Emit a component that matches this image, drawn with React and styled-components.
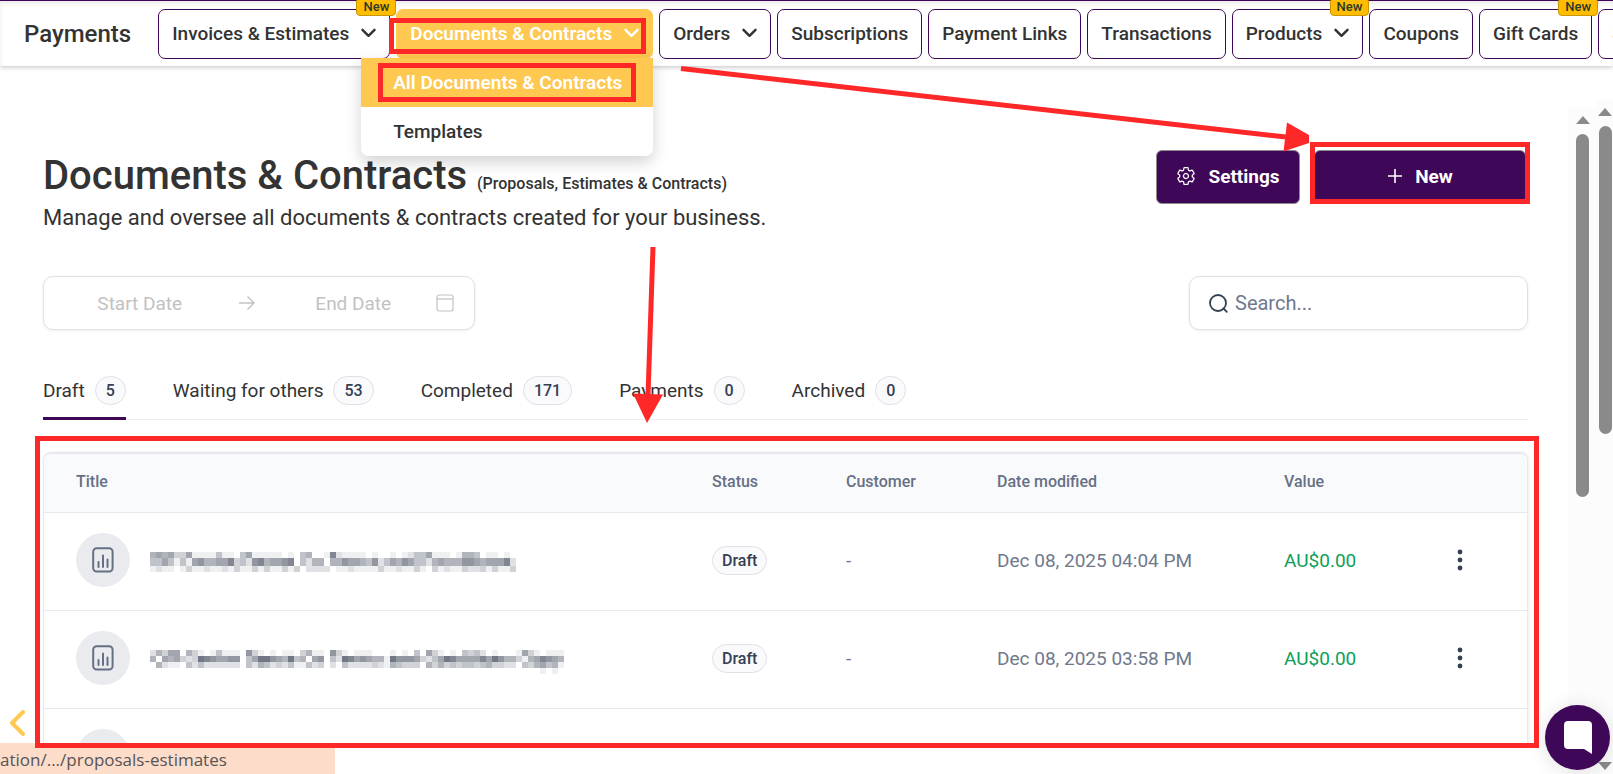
import { useState } from 'react';
import styled, { createGlobalStyle } from 'styled-components';
import { IoSettingsOutline } from 'react-icons/io5';

const GlobalStyle = createGlobalStyle`
* {
    box-sizing: border-box;
}
body {
    margin: 0;
    background-color: #fff;
    color: #333;
    font-family: Roboto, Arial, sans-serif;
}
button, input {
    font-family: inherit;
}
`;

const Page = styled.div`
position: relative;
height: 100vh;
display: flex;
flex-direction: column;
overflow: hidden;
`;

/* ---------- top bar ---------- */

const TopBar = styled.header`
position: relative;
z-index: 5;
display: flex;
align-items: center;
height: 66px;
flex-shrink: 0;
padding-left: 24px;
border-top: 1px solid #3f0758;
background-color: #fff;
box-shadow: 0 1px 5px rgba(0, 0, 0, 0.25), inset 0 3px 4px rgba(0, 0, 0, 0.08);
`;

const Brand = styled.h2`
margin: 0 27px 0 0;
font-size: 24px;
font-weight: 500;
white-space: nowrap;
`;

const Nav = styled.nav`
display: flex;
gap: 6px;
`;

const NavItem = styled.div`
position: relative;
flex-shrink: 0;
`;

const NavButton = styled.button`
display: flex;
align-items: center;
gap: 12px;
height: 50px;
padding: 0 13px;
border: 1px solid ${(p) => (p.$active ? '#ffc850' : '#3f0758')};
border-radius: 7px;
background-color: ${(p) => (p.$active ? '#ffc850' : '#fff')};
color: ${(p) => (p.$active ? '#fff' : '#333')};
font-size: 19px;
font-weight: ${(p) => (p.$active ? 600 : 500)};
white-space: nowrap;
cursor: pointer;
`;

const NewBadge = styled.span`
position: absolute;
top: -11px;
right: -6px;
padding: 0 6px;
height: 18px;
line-height: 16px;
border: 1px solid #c99700;
border-radius: 4px;
background-color: #ffbc00;
color: #2b3a2b;
font-size: 13px;
font-weight: 500;
z-index: 2;
`;

const Dropdown = styled.div`
position: absolute;
top: 49px;
right: 0;
width: 292px;
border-radius: 0 0 8px 8px;
background-color: #fff;
box-shadow: 0 6px 16px rgba(0, 0, 0, 0.18);
overflow: hidden;
`;

const DropdownLink = styled.a`
display: block;
padding-left: 32px;
line-height: 49px;
font-size: 19px;
font-weight: ${(p) => (p.$active ? 600 : 500)};
color: ${(p) => (p.$active ? '#fff' : '#333')};
background-color: ${(p) => (p.$active ? '#ffc850' : '#fff')};
text-decoration: none;
`;

/* red frame drawn over the thing it sits in */
const Highlight = styled.div`
position: absolute;
inset: ${(p) => p.$inset};
border: 5px solid #ff2828;
pointer-events: none;
z-index: 4;
`;

/* ---------- content ---------- */

const Body = styled.div`
display: flex;
flex: 1;
min-height: 0;
`;

const Main = styled.main`
display: flex;
flex-direction: column;
flex: 1;
min-width: 0;
padding: 84px 40px 31px 43px;
`;

const TitleRow = styled.div`
display: flex;
justify-content: space-between;
align-items: flex-start;
`;

const Heading = styled.h1`
margin: 0;
font-size: 40px;
line-height: 52px;
font-weight: 500;
white-space: nowrap;
`;

const SubHeading = styled.span`
margin-left: 10px;
font-size: 16px;
line-height: 1;
`;

const Description = styled.p`
margin: 0;
font-size: 22px;
line-height: 32px;
`;

const Actions = styled.div`
display: flex;
gap: 14px;
margin-right: 2px;
`;

const ActionWrap = styled.div`
position: relative;
`;

const ActionButton = styled.button`
display: flex;
align-items: center;
justify-content: center;
gap: 12px;
width: ${(p) => (p.$wide ? '212px' : '144px')};
height: 54px;
padding: 0 0 2px;
border: 1px solid #8a8a8a;
border-radius: 6px;
background-color: #3f0758;
color: #fff;
font-size: 19px;
font-weight: 700;
cursor: pointer;
`;

const Filters = styled.div`
display: flex;
justify-content: space-between;
margin-top: 42px;
`;

const FieldBox = styled.div`
display: flex;
align-items: center;
height: 54px;
border: 1px solid #e0e0e6;
border-radius: 10px;
box-shadow: 0 1px 3px rgba(16, 24, 40, 0.08);
color: #c2c2c2;
`;

const DateRange = styled(FieldBox)`
width: 432px;
padding: 0 20px 0 13px;
`;

const SearchBox = styled(FieldBox)`
width: 339px;
gap: 7px;
padding: 0 19px;
color: #344054;
`;

const TextInput = styled.input`
flex: 1;
min-width: 0;
padding: 0;
border: 0;
outline: 0;
background: none;
font-size: ${(p) => (p.$centered ? '19px' : '20px')};
text-align: ${(p) => (p.$centered ? 'center' : 'left')};
&::placeholder {
    color: ${(p) => (p.$centered ? '#c2c2c2' : '#70798c')};
    opacity: 1;
}
`;

const ArrowGap = styled.span`
display: flex;
padding: 0 16px;
`;

const Tabs = styled.div`
display: flex;
gap: 47px;
margin-top: 35px;
border-bottom: 1px solid #ececf2;
`;

const Tab = styled.button`
display: flex;
align-items: center;
gap: 10px;
height: 55px;
margin-bottom: -1px;
padding: 0 0 1px;
border: 0;
border-bottom: 3px solid ${(p) => (p.$active ? '#3f0758' : 'transparent')};
background: none;
color: #333;
font-size: 19px;
white-space: nowrap;
cursor: pointer;
`;

const Pill = styled.span`
display: inline-block;
min-width: 29px;
padding: 0 9px;
line-height: 27px;
border: 1px solid #e0e0e6;
border-radius: 15px;
background-color: #fafafc;
color: #344054;
font-size: 16px;
font-weight: 500;
text-align: center;
`;

const TabPill = styled(Pill)`
padding: 0 10px;
`;

const TableArea = styled.section`
position: relative;
flex: 1;
min-height: 0;
margin-top: 32px;
`;

const TableClip = styled.div`
height: 100%;
overflow: hidden;
border: 1px solid #e8e9ee;
border-top-width: 2px;
border-bottom: 0;
border-radius: 8px 8px 0 0;
box-shadow: 1px 0 3px rgba(16, 24, 40, 0.08);
`;

const Table = styled.table`
width: 100%;
table-layout: fixed;
border-collapse: collapse;
`;

const Th = styled.th`
width: ${(p) => p.$width || 'auto'};
height: 58px;
padding: 0 0 2px 32px;
border-bottom: 1px solid #e8e9ee;
background-color: #f9fafc;
color: #667085;
font-size: 16px;
font-weight: 500;
text-align: left;
`;

const Td = styled.td`
height: 98px;
padding: 0 0 2px 32px;
border-bottom: 1px solid #e8e9ee;
color: ${(p) => (p.$green ? '#0f9f58' : '#70798c')};
font-size: 19px;
white-space: nowrap;
`;

const TitleCell = styled.div`
display: flex;
align-items: center;
gap: 20px;
`;

const Avatar = styled.span`
display: flex;
align-items: center;
justify-content: center;
width: 54px;
height: 54px;
border-radius: 50%;
background-color: #eaebef;
color: #667085;
`;

const IconButton = styled.button`
display: flex;
padding: 4px;
border: 0;
background: none;
color: #344054;
cursor: pointer;
`;

/* ---------- scrollbars, floating things ---------- */

const Scrollbar = styled.div`
display: flex;
flex-direction: column;
align-items: center;
justify-content: space-between;
gap: 10px;
flex-shrink: 0;
width: ${(p) => p.$width};
margin-top: ${(p) => p.$top};
padding: 8px 0 4px;
background-color: #fcfcfc;
`;

const Triangle = styled.span`
flex-shrink: 0;
border: 7px solid transparent;
border-top-width: ${(p) => (p.$down ? '8px' : '0')};
border-bottom-width: ${(p) => (p.$down ? '0' : '8px')};
border-top-color: #8a8a8a;
border-bottom-color: #8a8a8a;
`;

const Track = styled.div`
flex: 1;
width: 13px;
`;

const Thumb = styled.div`
height: ${(p) => p.$size};
border-radius: 7px;
background-color: #8a8a8a;
`;

const BackButton = styled.button`
position: absolute;
left: 9px;
bottom: 37px;
display: flex;
padding: 0;
border: 0;
background: none;
cursor: pointer;
`;

const StatusBar = styled.div`
position: absolute;
left: 0;
bottom: 0;
width: 335px;
height: 31px;
background-color: #fddcca;
color: #555;
font-family: "Open Sans", "Noto Sans", sans-serif;
font-size: 17px;
line-height: 34px;
white-space: nowrap;
`;

const ChatButton = styled.button`
position: absolute;
right: 3px;
bottom: 4px;
display: flex;
align-items: center;
justify-content: center;
width: 65px;
height: 65px;
padding: 0;
border: 0;
border-radius: 50%;
background-color: #3f0758;
box-shadow: 0 2px 20px rgba(0, 0, 0, 0.12);
cursor: pointer;
z-index: 3;
`;

const Arrows = styled.svg`
position: absolute;
top: 0;
left: 0;
pointer-events: none;
z-index: 6;
`;

const navItems = [
    { label: 'Invoices & Estimates', menu: true, isNew: true },
    { label: 'Documents & Contracts', menu: true, active: true },
    { label: 'Orders', menu: true },
    { label: 'Subscriptions' },
    { label: 'Payment Links' },
    { label: 'Transactions' },
    { label: 'Products', menu: true, isNew: true },
    { label: 'Coupons' },
    { label: 'Gift Cards', isNew: true },
    { label: 'Settings' },
];

const tabs = [
    { label: 'Draft', count: 5 },
    { label: 'Waiting for others', count: 53 },
    { label: 'Completed', count: 171 },
    { label: 'Payments', count: 0 },
    { label: 'Archived', count: 0 },
];

// censored titles: one digit per block, 0 is clear and 9 is darkest
const documents = [
    {
        id: 1,
        status: 'Draft',
        customer: '-',
        date: 'Dec 08, 2025 04:04 PM',
        value: 'AU$0.00',
        tops: [0, 6, 14, 20],
        mosaic: [
            '5656336111141104611111010450018211110100101244611101554011010',
            '4464141675566834278566780425505576654724657644256555776566682',
            '1211013112112131131311313022220112111131121131031211322313113',
        ],
    },
    {
        id: 2,
        status: 'Draft',
        customer: '-',
        date: 'Dec 08, 2025 03:58 PM',
        value: 'AU$0.00',
        tops: [0, 6, 12, 18, 24],
        mosaic: [
            '253660531014111073101011035110731011100010104063101043420100016310111',
            '506563239876677046997659450670429867655197776324698666686975531568765',
            '052110424222222042542324114230204222232154333053534344345332204356451',
            '000000000000000000000000000000000000000000000000000000000000000001010',
        ],
    },
    // still loading
    { id: 3 },
];

function Chevron() {
    return (
        <svg width="15" height="12" viewBox="0 0 15 12" fill="none" stroke="currentColor" strokeWidth="2.4" strokeLinecap="round" strokeLinejoin="round">
            <path d="M1.5 1.8 7.5 7.8 13.5 1.8" />
        </svg>
    );
}

function Mosaic({ rows, tops }) {
    const width = rows[0].length * 6;
    return (
        <svg width={width} height="34" viewBox={`0 -9 ${width} 34`} shapeRendering="crispEdges">
            {rows.map((row, y) =>
                row.split('').map((d, x) => (
                    <rect key={`${y}-${x}`} x={x * 6} y={tops[y]} width="6" height={(tops[y + 1] || 26) - tops[y]} fill="#6a707e" opacity={Number(d) / 9.5} />
                ))
            )}
        </svg>
    );
}

function ReportIcon() {
    return (
        <svg width="22" height="26" viewBox="0 0 22 26" fill="none" stroke="currentColor" strokeWidth="2" strokeLinecap="round">
            <rect x="1.2" y="1.2" width="19.4" height="23.4" rx="3.5" />
            <path d="M6.5 15v5M11 8.5V20M15.5 12.5V20" />
        </svg>
    );
}

function App() {
    const [tab, setTab] = useState('Draft');

    return (
        <Page>
            <GlobalStyle />
            <TopBar>
                <Brand>Payments</Brand>
                <Nav>
                    {navItems.map((item) => (
                        <NavItem key={item.label}>
                            <NavButton $active={item.active}>
                                {item.label}
                                {item.menu && <Chevron />}
                            </NavButton>
                            {item.isNew && <NewBadge>New</NewBadge>}
                            {item.active && (
                                <>
                                    <Dropdown>
                                        <DropdownLink href="#all" $active>All Documents &amp; Contracts</DropdownLink>
                                        <DropdownLink href="#templates">Templates</DropdownLink>
                                        <Highlight $inset="5px 17px 54px 17px" />
                                    </Dropdown>
                                    <Highlight $inset="9px 7px 5px -7px" />
                                </>
                            )}
                        </NavItem>
                    ))}
                </Nav>
            </TopBar>

            <Body>
                <Main>
                    <TitleRow>
                        <div>
                            <Heading>
                                Documents &amp; Contracts
                                <SubHeading>(Proposals, Estimates &amp; Contracts)</SubHeading>
                            </Heading>
                            <Description>Manage and oversee all documents &amp; contracts created for your business.</Description>
                        </div>
                        <Actions>
                            <ActionButton>
                                <IoSettingsOutline size={20} />
                                Settings
                            </ActionButton>
                            <ActionWrap>
                                <ActionButton $wide>
                                    <svg width="16" height="16" viewBox="0 0 16 16" stroke="currentColor" strokeWidth="1.6">
                                        <path d="M8 1v14M1 8h14" />
                                    </svg>
                                    New
                                </ActionButton>
                                <Highlight $inset="-8px -4px 0 -4px" />
                            </ActionWrap>
                        </Actions>
                    </TitleRow>

                    <Filters>
                        <DateRange>
                            <TextInput $centered placeholder="Start Date" aria-label="Start Date" />
                            <ArrowGap>
                                <svg width="16" height="16" viewBox="0 0 16 16" fill="none" stroke="currentColor" strokeWidth="1.4">
                                    <path d="M0 8h15M8.5 1.5 15 8l-6.500 6.500" />
                                </svg>
                            </ArrowGap>
                            <TextInput $centered placeholder="End Date" aria-label="End Date" />
                            <svg width="18" height="18" viewBox="0 0 18 18" fill="none" stroke="currentColor" strokeWidth="1.2">
                                <rect x="1" y="1" width="16" height="16" rx="2" />
                                <path d="M1 5h16" />
                            </svg>
                        </DateRange>
                        <SearchBox>
                            <svg width="19" height="19" viewBox="0 0 19 19" fill="none" stroke="currentColor" strokeWidth="1.8" strokeLinecap="round">
                                <circle cx="9" cy="9" r="8" />
                                <path d="m14.500 14.500 3.300 3.300" />
                            </svg>
                            <TextInput placeholder="Search..." aria-label="Search" />
                        </SearchBox>
                    </Filters>

                    <Tabs>
                        {tabs.map((t) => (
                            <Tab key={t.label} $active={t.label === tab} onClick={() => setTab(t.label)}>
                                {t.label}
                                <TabPill>{t.count}</TabPill>
                            </Tab>
                        ))}
                    </Tabs>

                    <TableArea>
                        <TableClip>
                            <Table>
                                <thead>
                                    <tr>
                                        <Th>Title</Th>
                                        <Th $width="134px">Status</Th>
                                        <Th $width="151px">Customer</Th>
                                        <Th $width="287px">Date modified</Th>
                                        <Th $width="169px">Value</Th>
                                        <Th $width="106px" aria-label="Actions" />
                                    </tr>
                                </thead>
                                <tbody>
                                    {documents.map((doc) => (
                                        <tr key={doc.id}>
                                            <Td>
                                                <TitleCell>
                                                    <Avatar><ReportIcon /></Avatar>
                                                    {doc.mosaic && <Mosaic rows={doc.mosaic} tops={doc.tops} />}
                                                </TitleCell>
                                            </Td>
                                            <Td>{doc.status && <Pill>{doc.status}</Pill>}</Td>
                                            <Td>{doc.customer}</Td>
                                            <Td>{doc.date}</Td>
                                            <Td $green>{doc.value}</Td>
                                            <Td>
                                                <IconButton aria-label="More">
                                                    <svg width="6" height="22" viewBox="0 0 6 22" fill="currentColor">
                                                        <circle cx="3" cy="3" r="2.400" />
                                                        <circle cx="3" cy="11" r="2.400" />
                                                        <circle cx="3" cy="19" r="2.400" />
                                                    </svg>
                                                </IconButton>
                                            </Td>
                                        </tr>
                                    ))}
                                </tbody>
                            </Table>
                        </TableClip>
                        <Highlight $inset="-16px -11px -5px -8px" />
                    </TableArea>
                </Main>
                <Scrollbar $width="29px" $top="42px">
                    <Triangle />
                    <Track><Thumb $size="363px" /></Track>
                </Scrollbar>
                <Scrollbar $width="16px" $top="34px">
                    <Triangle />
                    <Track><Thumb $size="308px" /></Track>
                    <Triangle $down />
                </Scrollbar>
            </Body>

            <BackButton aria-label="Back">
                <svg width="18" height="28" viewBox="0 0 18 28" fill="none" stroke="#ffc850" strokeWidth="4" strokeLinecap="round" strokeLinejoin="round">
                    <path d="M14 3 3 14l11 11" />
                </svg>
            </BackButton>
            <StatusBar>ation/.../proposals-estimates</StatusBar>
            <ChatButton aria-label="Open chat">
                <svg width="28" height="33" viewBox="0 0 28 33" fill="#fff">
                    <path d="M4 0h20a4 4 0 0 1 4 4v29l-8-5H4a4 4 0 0 1-4-4V4a4 4 0 0 1 4-4z" />
                </svg>
            </ChatButton>

            <Arrows width="1320" height="430" viewBox="0 0 1320 430" fill="#ff2828" stroke="#ff2828">
                <path d="M681 68.500 1286 137" strokeWidth="5" />
                <path d="M1287 122.500 1309 135v8l-25.500 8.500z" stroke="none" />
                <path d="M653 247 648 396" strokeWidth="5" />
                <path d="M633 393.500 663 394.500 647 423z" stroke="none" />
            </Arrows>
        </Page>
    );
}

export default App;
